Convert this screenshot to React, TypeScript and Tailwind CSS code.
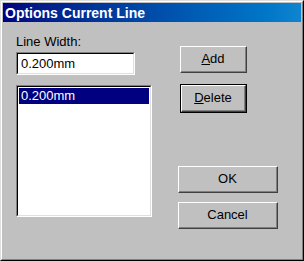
import React from "react";

const Btn = ({ children, cls = "", def = false }: { children: React.ReactNode; cls?: string; def?: boolean }) => (
  <div className={`${cls} ${def ? "border border-black" : ""} box-border`}>
    <div className="w-full h-full box-border border-t border-l border-white border-r border-b border-r-[#404040] border-b-[#404040] bg-[#c0c0c0]">
      <div className="w-full h-full box-border border-r border-b border-[#808080] flex items-center justify-center text-[13px] text-black">
        {children}
      </div>
    </div>
  </div>
);

export default function App() {
  return (
    <div className="w-[304px] h-[261px] box-border bg-[#c0c0c0] border-t border-l border-[#dfdfdf] border-r border-b border-r-black border-b-black" style={{ fontFamily: '"Liberation Sans", Arial, sans-serif' }}>
      <div className="w-full h-full box-border border-t border-l border-white border-r border-b border-r-[#808080] border-b-[#808080] p-[1px]">
        <div className="h-[19px] bg-gradient-to-r from-[#000080] to-[#1084d0] flex items-center pl-[2px] text-white font-bold text-[14px] leading-none">
          Options Current Line
        </div>
        <div className="flex">
          <div className="flex flex-col pl-[13px]">
            <div className="mt-[13px] text-[13px] leading-[14px] text-black">Line Width:</div>
            <div className="mt-[3px] w-[119px] h-[23px] box-border border-t border-l border-[#808080] border-r border-b border-r-white border-b-white">
              <div className="w-full h-full box-border border-t border-l border-black border-r border-b border-r-[#dfdfdf] border-b-[#dfdfdf] bg-white flex items-center pl-[3px] text-[13px] text-black">
                0.200mm
              </div>
            </div>
            <div className="mt-[10px] w-[136px] h-[132px] box-border border-t border-l border-[#808080] border-r border-b border-r-white border-b-white">
              <div className="w-full h-full box-border border-t border-l border-black border-r border-b border-r-[#dfdfdf] border-b-[#dfdfdf] bg-white pt-[1px] px-[1px]">
                <div className="h-[16px] bg-[#000080] text-white text-[13px] leading-[16px] pl-[2px]">0.200mm</div>
              </div>
            </div>
          </div>
          <div className="flex flex-col ml-[26px]">
            <Btn cls="mt-[24px] ml-[2px] w-[67px] h-[27px]"><span><u>A</u>dd</span></Btn>
            <Btn cls="mt-[11px] ml-[2px] w-[67px] h-[29px]" def><span><u>D</u>elete</span></Btn>
            <Btn cls="mt-[53px] w-[100px] h-[27px]">OK</Btn>
            <Btn cls="mt-[9px] w-[100px] h-[27px]">Cancel</Btn>
          </div>
        </div>
      </div>
    </div>
  );
}
